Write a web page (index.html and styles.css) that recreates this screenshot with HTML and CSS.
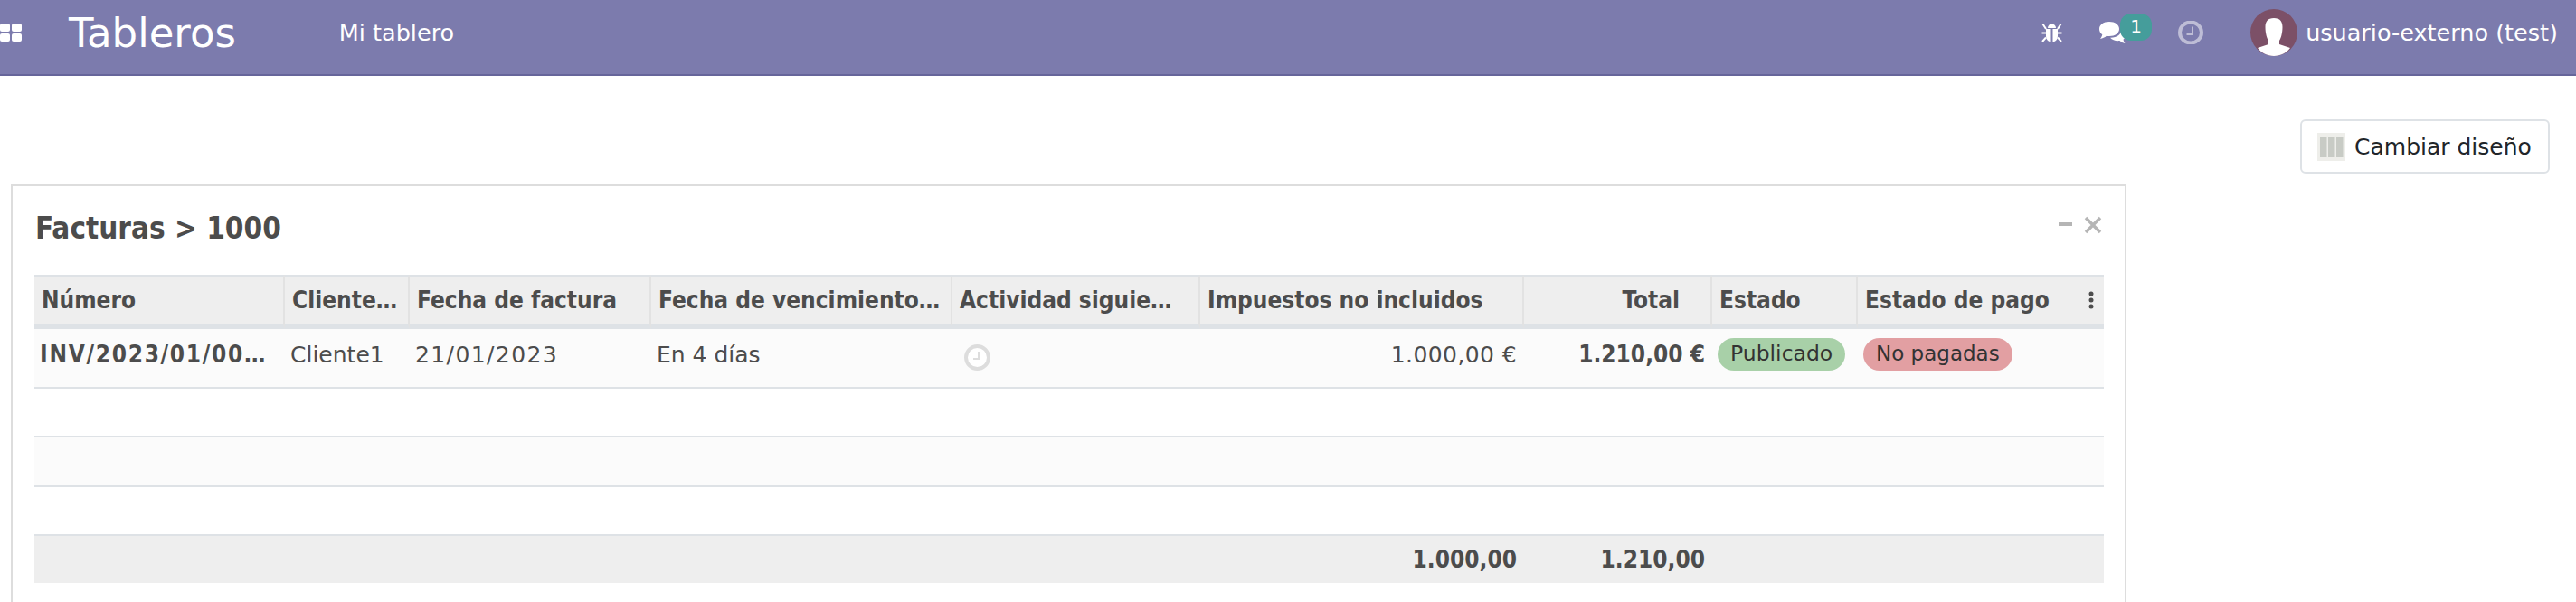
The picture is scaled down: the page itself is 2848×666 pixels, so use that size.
FILE: index.html
```html
<!DOCTYPE html>
<html lang="es">
<head>
<meta charset="utf-8">
<title>Tableros</title>
<link rel="stylesheet" href="styles.css">
</head>
<body>
  <header class="navbar">
    <svg class="apps-icon" viewBox="0 0 24 20"><rect x="0" width="11" height="9" rx="2"/><rect x="13" width="11" height="9" rx="2"/><rect x="0" y="11" width="11" height="9" rx="2"/><rect x="13" y="11" width="11" height="9" rx="2"/></svg>
    <a class="brand">Tableros</a>
    <a class="menu-link">Mi tablero</a>
    <div class="systray">
      <svg class="bug-icon" viewBox="0 0 23 22"><path d="M7 6a4.500 4.500 0 0 1 9 0z"/><path d="M5 7h5.500v14.500C7.500 21 5 18.500 5 15z"/><path d="M12.500 7H18v8c0 3.500-2.500 6-5.500 6.500z"/><path d="M1.500 1.500 5 7M21.500 1.500 18 7M.5 11.500h4.500M22.500 11.500H18M1 21l4-4.500M22 21l-4-4.500" fill="none" stroke="#fff" stroke-width="2"/></svg>
      <div class="chat">
        <svg class="chat-icon" viewBox="0 0 31 26"><path d="M12 1c6.500 0 11 3.500 11 8s-4.500 8-11 8c-1 0-2 0-3-.2C7 18.500 4.500 19.500 2 20c1-1.300 2-3 2.300-4.800C2 13.700 1 11.500 1 9c0-4.500 4.500-8 11-8z"/><path d="M25 10c3 1 5 3.200 5 6 0 2-1 3.500-2.500 4.700.2 1.500 1 3 2 4.300-2.500-.4-4.500-1.400-6-3-4 .6-8-.5-10.500-3.300C20 19 25.500 15.500 25 10z"/></svg>
        <span class="chat-badge">1</span>
      </div>
      <svg class="clock-icon" viewBox="0 0 28 26"><ellipse cx="14" cy="13" rx="12" ry="11.500" fill="none" stroke="currentColor" stroke-width="4"/><path d="M16 6.500v8.500h-6.500" fill="none" stroke="currentColor" stroke-width="2"/></svg>
      <div class="user">
        <svg class="avatar" viewBox="0 0 52 52"><circle cx="26" cy="26" r="26" fill="#7c5067"/><path d="M26 10c7 0 9.500 4 9.500 10 0 7-2 13-3.500 15v4l12 4c-4 5.500-10.500 9-18 9s-14-3.500-18-9l12-4v-4c-1.500-2-3.500-8-3.500-15 0-6 2.500-10 9.500-10z" fill="#fff"/></svg>
        <span class="user-name">usuario-externo (test)</span>
      </div>
    </div>
  </header>

  <div class="toolbar">
    <button class="layout-btn">
      <svg class="layout-icon" viewBox="0 0 31 31"><rect width="31" height="31" fill="#eeeeea"/><rect x="3" y="5" width="7.500" height="22" fill="#c8cbc5"/><rect x="12" y="5" width="7.500" height="22" fill="#c8cbc5"/><rect x="21" y="5" width="7.500" height="22" fill="#c8cbc5"/></svg>
      Cambiar diseño
    </button>
  </div>

  <section class="card">
    <div class="card-head">
      <h2 class="card-title">Facturas &gt; 1000</h2>
      <div class="card-actions">
        <svg class="minus-icon" viewBox="0 0 15 4"><rect width="15" height="4"/></svg>
        <svg class="close-icon" viewBox="0 0 20 20"><path d="M2 2l16 16M18 2L2 18" fill="none" stroke="currentColor" stroke-width="3.500"/></svg>
      </div>
    </div>

    <table class="list">
      <colgroup>
        <col class="c-num"><col class="c-client"><col class="c-date"><col class="c-due"><col class="c-act"><col class="c-tax"><col class="c-total"><col class="c-state"><col class="c-pay">
      </colgroup>
      <thead>
        <tr>
          <th>Número</th>
          <th>Cliente de factura</th>
          <th>Fecha de factura</th>
          <th>Fecha de vencimiento de pago</th>
          <th class="th-act">Actividad siguiente</th>
          <th>Impuestos no incluidos</th>
          <th class="num th-total">Total</th>
          <th>Estado</th>
          <th class="with-dots">Estado de pago
            <svg class="dots-icon" viewBox="0 0 6 20"><circle cx="3" cy="3" r="2.500"/><circle cx="3" cy="10" r="2.500"/><circle cx="3" cy="17" r="2.500"/></svg>
          </th>
        </tr>
      </thead>
      <tbody>
        <tr class="row-main">
          <td class="strong inv">INV/2023/01/0001</td>
          <td>Cliente1</td>
          <td class="date">21/01/2023</td>
          <td>En 4 días</td>
          <td><svg class="act-icon" viewBox="0 0 29 29"><circle cx="14.500" cy="14.500" r="12.500" fill="#fff" stroke="#ddd" stroke-width="4"/><path d="M16 8v8h-6" fill="none" stroke="#ddd" stroke-width="2"/></svg></td>
          <td class="num amount">1.000,00 €</td>
          <td class="num strong">1.210,00 €</td>
          <td><span class="pill pill-green">Publicado</span></td>
          <td><span class="pill pill-red">No pagadas</span></td>
        </tr>
        <tr class="row-empty"><td colspan="9"></td></tr>
        <tr class="row-empty row-odd"><td colspan="9"></td></tr>
        <tr class="row-empty"><td colspan="9"></td></tr>
      </tbody>
      <tfoot>
        <tr>
          <td colspan="5"></td>
          <td class="num">1.000,00</td>
          <td class="num">1.210,00</td>
          <td colspan="2"></td>
        </tr>
      </tfoot>
    </table>
  </section>
</body>
</html>
```

FILE: styles.css
```css
html, body {
  height: 666px;
  overflow: hidden;
}
body {
  margin: 0;
  background: #fff;
  color: #4c4c4c;
  font-family: "DejaVu Sans", "Liberation Sans", sans-serif;
  font-size: 25px;
}

/* barra superior */
.navbar {
  display: flex;
  align-items: center;
  box-sizing: border-box;
  height: 84px;
  padding-bottom: 10px;
  background: #7c7bad;
  border-bottom: 2px solid #66659a;
  color: #fff;
}
.apps-icon {
  width: 24px;
  height: 20px;
  fill: #fff;
}
.brand {
  margin-left: 52px;
  font-size: 45px;
  line-height: 1;
}
.menu-link {
  margin-left: 114px;
  font-size: 25.500px;
}
.systray {
  display: flex;
  align-items: center;
  margin-left: auto;
  padding-right: 20px;
}
.bug-icon {
  width: 23px;
  height: 22px;
  fill: #fff;
}
.chat {
  position: relative;
  width: 59px;
  height: 26px;
  margin-left: 40px;
}
.chat-icon {
  width: 31px;
  height: 26px;
  fill: #fff;
}
.chat-badge {
  position: absolute;
  left: 24px;
  top: -8px;
  width: 35px;
  height: 30px;
  border-radius: 12px;
  background: #459d9b;
  font-size: 20px;
  line-height: 28px;
  text-align: center;
}
.clock-icon {
  width: 28px;
  height: 26px;
  margin-left: 29px;
  color: rgba(255, 255, 255, .5);
}
.user {
  display: flex;
  align-items: center;
  margin-left: 52px;
}
.user-name {
  font-size: 25.500px;
}
.avatar {
  width: 52px;
  height: 52px;
  margin-right: 9px;
}

/* boton de diseno */
.toolbar {
  display: flex;
  justify-content: flex-end;
  padding: 48px 29px 12px 0;
}
.layout-btn {
  display: flex;
  align-items: center;
  gap: 10px;
  width: 276px;
  height: 60px;
  padding: 0 0 0 17px;
  background: #fff;
  border: 2px solid #dee2e6;
  border-radius: 6px;
  color: #212529;
  font-family: inherit;
  font-size: 25px;
}
.layout-icon {
  width: 31px;
  height: 31px;
}

/* tarjeta */
.card {
  width: 2339px;
  margin-left: 12px;
  height: 462px;
  padding: 0 24px;
  box-sizing: border-box;
  border: 2px solid #dddddd;
  border-bottom: 0;
}
.card-head {
  display: flex;
  justify-content: space-between;
  height: 98px;
}
.card-title {
  margin: 26px 0 0 1px;
  font-family: "DejaVu Sans Condensed", "DejaVu Sans", sans-serif;
  font-size: 33px;
  font-weight: 700;
  line-height: 42px;
}
.card-actions {
  display: flex;
  align-items: center;
  gap: 13px;
  height: 20px;
  margin-top: 33px;
  padding-right: 1px;
  color: #b5b5b5;
}
.minus-icon {
  width: 15px;
  height: 4px;
  fill: #b5b5b5;
  margin-bottom: 2px;
}
.close-icon {
  width: 20px;
  height: 20px;
}

/* tabla */
.list {
  width: 2288px;
  table-layout: fixed;
  border-collapse: separate;
  border-spacing: 0;
}
.c-num { width: 277px; }
.c-client { width: 138px; }
.c-date { width: 267px; }
.c-due { width: 333px; }
.c-act { width: 274px; }
.c-tax { width: 358px; }
.c-total { width: 208px; }
.c-state { width: 161px; }
.c-pay { width: 272px; }

.list th, .list td {
  padding: 0 8px;
  overflow: hidden;
  white-space: nowrap;
  text-overflow: ellipsis;
  text-align: left;
}
.list thead th {
  height: 52px;
  background: #eeeeee;
  border-top: 2px solid #dee2e6;
  border-right: 2px solid #e2e2e2;
  border-bottom: 6px solid #dee2e6;
  font-family: "DejaVu Sans Condensed", "DejaVu Sans", sans-serif;
  font-size: 26px;
  font-weight: 700;
}
.list thead th:last-child {
  border-right: 0;
}
.list .num {
  text-align: right;
}
.list thead .th-act {
  padding-right: 22px;
}
.list thead .th-total {
  padding-right: 34px;
}
.list .with-dots {
  position: relative;
  padding-right: 30px;
}
.dots-icon {
  position: absolute;
  right: 11px;
  top: 16px;
  width: 6px;
  height: 20px;
  fill: #4c4c4c;
}
.list tbody td {
  border-bottom: 2px solid #dee2e6;
}
.row-main td {
  height: 56px;
  background: #fbfbfb;
  padding: 0 8px 8px 6px;
}
.list .row-main .inv {
  padding-right: 16px;
  letter-spacing: 1.700px;
}
.date {
  letter-spacing: 1.400px;
}
.amount {
  letter-spacing: .400px;
}
.row-empty td {
  height: 52px;
  padding: 0;
}
.list .row-odd td {
  height: 53px;
  padding: 0;
  background: #fbfbfb;
}
.list tfoot td {
  height: 52px;
  background: #eeeeee;
  font-family: "DejaVu Sans Condensed", "DejaVu Sans", sans-serif;
  font-size: 26px;
  font-weight: 700;
}
.strong {
  font-family: "DejaVu Sans Condensed", "DejaVu Sans", sans-serif;
  font-size: 26px;
  font-weight: 700;
}
.act-icon {
  display: block;
  width: 29px;
  height: 29px;
  margin: 7px 0 0 7px;
}
.pill {
  display: inline-block;
  height: 36px;
  padding: 0 14px;
  border-radius: 18px;
  color: #333;
  font-size: 23.500px;
  line-height: 35px;
  vertical-align: middle;
}
.pill-green { background: #a8d0a8; }
.pill-red {
  background: #e29fa2;
  font-size: 23px;
}
```
